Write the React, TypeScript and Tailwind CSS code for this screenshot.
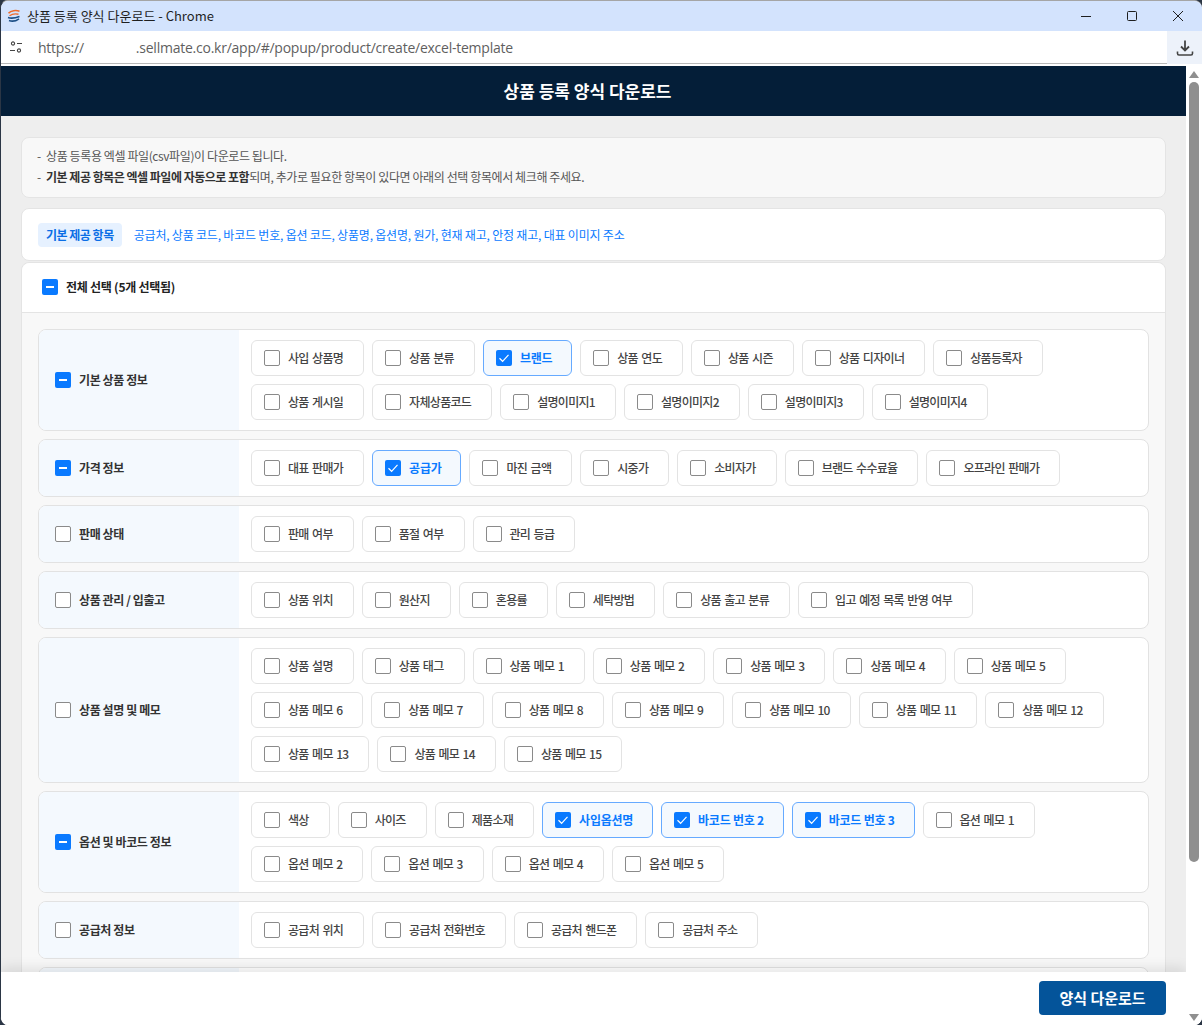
import React from "react";

type Item = [string, boolean?];
type Section = { title: string; state: "none" | "some"; items: Item[] };

const sections: Section[] = [
  { title: "기본 상품 정보", state: "some", items: [["사입 상품명"], ["상품 분류"], ["브랜드", true], ["상품 연도"], ["상품 시즌"], ["상품 디자이너"], ["상품등록자"], ["상품 게시일"], ["자체상품코드"], ["설명이미지1"], ["설명이미지2"], ["설명이미지3"], ["설명이미지4"]] },
  { title: "가격 정보", state: "some", items: [["대표 판매가"], ["공급가", true], ["마진 금액"], ["시중가"], ["소비자가"], ["브랜드 수수료율"], ["오프라인 판매가"]] },
  { title: "판매 상태", state: "none", items: [["판매 여부"], ["품절 여부"], ["관리 등급"]] },
  { title: "상품 관리 / 입출고", state: "none", items: [["상품 위치"], ["원산지"], ["혼용률"], ["세탁방법"], ["상품 출고 분류"], ["입고 예정 목록 반영 여부"]] },
  { title: "상품 설명 및 메모", state: "none", items: [["상품 설명"], ["상품 태그"], ["상품 메모 1"], ["상품 메모 2"], ["상품 메모 3"], ["상품 메모 4"], ["상품 메모 5"], ["상품 메모 6"], ["상품 메모 7"], ["상품 메모 8"], ["상품 메모 9"], ["상품 메모 10"], ["상품 메모 11"], ["상품 메모 12"], ["상품 메모 13"], ["상품 메모 14"], ["상품 메모 15"]] },
  { title: "옵션 및 바코드 정보", state: "some", items: [["색상"], ["사이즈"], ["제품소재"], ["사입옵션명", true], ["바코드 번호 2", true], ["바코드 번호 3", true], ["옵션 메모 1"], ["옵션 메모 2"], ["옵션 메모 3"], ["옵션 메모 4"], ["옵션 메모 5"]] },
  { title: "공급처 정보", state: "none", items: [["공급처 위치"], ["공급처 전화번호"], ["공급처 핸드폰"], ["공급처 주소"]] },
];

function Box({ state }: { state: "none" | "some" | "checked" }) {
  if (state === "none") return <span className="block w-4 h-4 shrink-0 rounded-[2px] border border-[#8a8a8a] bg-white" />;
  return (
    <span className="flex items-center justify-center w-4 h-4 shrink-0 rounded-[2px] bg-[#0a7aff]">
      {state === "some" ? (
        <span className="block w-2 h-[2px] bg-white" />
      ) : (
        <svg width="12" height="12" viewBox="0 0 12 12" fill="none">
          <path d="M1.5 6.3L4.6 9.3L10.5 2.8" stroke="white" strokeWidth="1.2" />
        </svg>
      )}
    </span>
  );
}

function Chip({ label, on }: { label: string; on?: boolean }) {
  return (
    <div className={`flex items-center gap-2 h-9 pl-3 rounded-md border text-xs ${on ? "pr-[19px] border-[#66aaff] bg-[#f4f9fe] text-[#0a7aff] font-bold tracking-[-0.25px]" : "pr-[20px] border-[#e3e3e3] bg-white text-[#444444] font-medium tracking-[-0.7px] [word-spacing:1.4px]"}`}>
      <Box state={on ? "checked" : "none"} />
      <span>{label}</span>
    </div>
  );
}

export default function App() {
  return (
    <div className="w-[1202px] h-[1025px] overflow-hidden bg-[#2b3645] font-['Noto_Sans_CJK_KR','Noto_Sans',sans-serif]">
      <div className="w-full h-full flex flex-col rounded-lg overflow-hidden border-t border-l border-[#a5a5a5] border-l-[#2b3645] bg-white">
        <div className="h-[30px] shrink-0 bg-[#d3e3fd] flex items-center pl-[5px] text-[13px] text-[#1f1f1f]">
          <svg width="16" height="16" viewBox="0 0 16 16" fill="none" className="mr-[5px]">
            <path d="M2.5 5.2C5 2.4 10 2 13.5 3.2" stroke="#ef6a2c" strokeWidth="1.6" />
            <path d="M3.5 7.8C6 6 10 5.7 12.5 6.3" stroke="#ef6a2c" strokeWidth="1.4" />
            <path d="M2 9.6C5 10.6 9 10.2 13.5 8.6" stroke="#1d4f86" strokeWidth="1.6" />
            <path d="M3 12.6C6 13.6 10 13 13 10.8" stroke="#1d4f86" strokeWidth="1.6" />
          </svg>
          <span>상품 등록 양식 다운로드 - Chrome</span>
          <div className="ml-auto flex items-center">
            <span className="flex w-[46px] justify-center">
              <svg width="12" height="12" viewBox="0 0 12 12"><path d="M1 6.5H11" stroke="#1f1f1f" strokeWidth="1" /></svg>
            </span>
            <span className="flex w-[46px] justify-center">
              <svg width="12" height="12" viewBox="0 0 12 12" fill="none"><rect x="1.5" y="1.5" width="9" height="9" rx="1" stroke="#1f1f1f" /></svg>
            </span>
            <span className="flex w-[46px] justify-center mr-[1px]">
              <svg width="12" height="12" viewBox="0 0 12 12" fill="none"><path d="M1 1L11 11M11 1L1 11" stroke="#1f1f1f" strokeWidth="1" /></svg>
            </span>
          </div>
        </div>
        <div className="h-[33px] shrink-0 flex bg-white">
          <div className="flex-1 flex items-center border-b border-[#b8b8b8] pl-[9px]">
            <svg width="12" height="12" viewBox="0 0 12 12" fill="none" className="mr-[16px]">
              <circle cx="3" cy="2.5" r="1.6" stroke="#444" strokeWidth="1.1" />
              <path d="M7 2.5H12M0 9.5H5" stroke="#444" strokeWidth="1.2" />
              <circle cx="9" cy="9.5" r="1.6" stroke="#444" strokeWidth="1.1" />
            </svg>
            <span className="text-[14px] text-[#5f5f5f] font-['Open_Sans'] tracking-[-0.24px]">https://</span>
            <span className="text-[14px] text-[#5f5f5f] font-['Open_Sans'] tracking-[-0.24px] ml-[52px]">.sellmate.co.kr/app/#/popup/product/create/excel-template</span>
          </div>
          <div className="w-[35px] bg-[#edf2fa] flex items-center justify-center">
            <svg width="18" height="18" viewBox="0 0 18 18" fill="none" className="text-[#444]">
              <path d="M9 1.5V11M5 7.5L9 11.5L13 7.5" stroke="currentColor" strokeWidth="1.8" />
              <path d="M1.5 12.5V14.5Q1.5 16 3 16H15Q16.5 16 16.5 14.5V12.5" stroke="currentColor" strokeWidth="1.6" />
            </svg>
          </div>
        </div>
        <div className="flex-1 min-h-0 flex pt-[2px] bg-white">
          <div className="flex-1 min-w-0 flex flex-col">
            <div className="h-[50px] shrink-0 bg-[#041e38] flex items-center justify-center pr-3 text-white text-[17px] font-bold">
              상품 등록 양식 다운로드
            </div>
            <div className="flex-1 min-h-0 overflow-hidden bg-[#eeeeee] pt-[21px] px-5">
              <div className="h-[61px] rounded-lg border border-[#e4e4e4] bg-[#f8f8f8] pl-[15px] pr-4 pb-[3px] flex flex-col justify-center gap-[5px] text-xs leading-4 tracking-[-0.4px] text-[#555555]">
                <div><span className="mr-[3px]">-</span> 상품 등록용 엑셀 파일(csv파일)이 다운로드 됩니다.</div>
                <div><span className="mr-[3px]">-</span> <b className="font-bold tracking-[-0.5px] text-[#333333]">기본 제공 항목은 엑셀 파일에 자동으로 포함</b>되며, 추가로 필요한 항목이 있다면 아래의 선택 항목에서 체크해 주세요.</div>
              </div>
              <div className="h-[53px] mt-[10px] rounded-lg border border-[#e4e4e4] bg-white flex items-center pl-4 text-xs tracking-[-0.2px] text-[#0a7aff]">
                <span className="h-6 px-2 flex items-center rounded bg-[#e6f1ff] font-bold tracking-[-0.5px] text-[#0a6ee6]">기본 제공 항목</span>
                <span className="ml-3">공급처, 상품 코드, 바코드 번호, 옵션 코드, 상품명, 옵션명, 원가, 현재 재고, 안정 재고, 대표 이미지 주소</span>
              </div>
              <div className="mt-[1px] rounded-lg border border-[#e4e4e4] bg-[#f8f8f8]">
                <div className="h-[50px] pb-[2px] bg-white rounded-t-lg border-b border-[#e4e4e4] flex items-center gap-2 pl-5 text-xs tracking-[-0.25px] font-bold text-[#222222]">
                  <Box state="some" />
                  <span>전체 선택 (5개 선택됨)</span>
                </div>
                <div className="p-4 flex flex-col gap-2">
                  {sections.map((s) => (
                    <div key={s.title} className="flex rounded-lg border border-[#e2e2e2] bg-white overflow-hidden">
                      <div className="w-[200px] shrink-0 bg-[#f4f9fe] flex items-center gap-2 pl-4 text-xs tracking-[-0.4px] font-bold text-[#333333]">
                        <Box state={s.state} />
                        <span>{s.title}</span>
                      </div>
                      <div className="flex-1 flex flex-wrap gap-2 p-[10px] pl-3">
                        {s.items.map(([l, on]) => <Chip key={l} label={l} on={on} />)}
                      </div>
                    </div>
                  ))}
                  <div className="h-[58px] flex rounded-lg border border-[#e2e2e2] bg-white overflow-hidden">
                    <div className="w-[200px] shrink-0 bg-[#f4f9fe]" />
                  </div>
                </div>
              </div>
            </div>
            <div className="relative h-[53px] shrink-0 bg-white flex items-center justify-end pr-5 pb-[1px] shadow-[0_-4px_12px_rgba(0,0,0,0.1)]">
              <button className="w-[127px] h-[34px] rounded bg-[#04549a] text-white text-[15px] font-bold">양식 다운로드</button>
            </div>
          </div>
          <div className="w-4 shrink-0 bg-white flex flex-col items-center relative">
            <span className="mt-[5px] w-0 h-0 border-x-[5px] border-x-transparent border-b-[7px] border-b-[#8f8f8f]" />
            <span className="mt-[4px] w-[10px] h-[780px] rounded-full bg-[#8f8f8f]" />
            <span className="mt-auto mb-[4px] w-0 h-0 border-x-[5px] border-x-transparent border-t-[7px] border-t-[#8f8f8f]" />
          </div>
        </div>
      </div>
    </div>
  );
}
